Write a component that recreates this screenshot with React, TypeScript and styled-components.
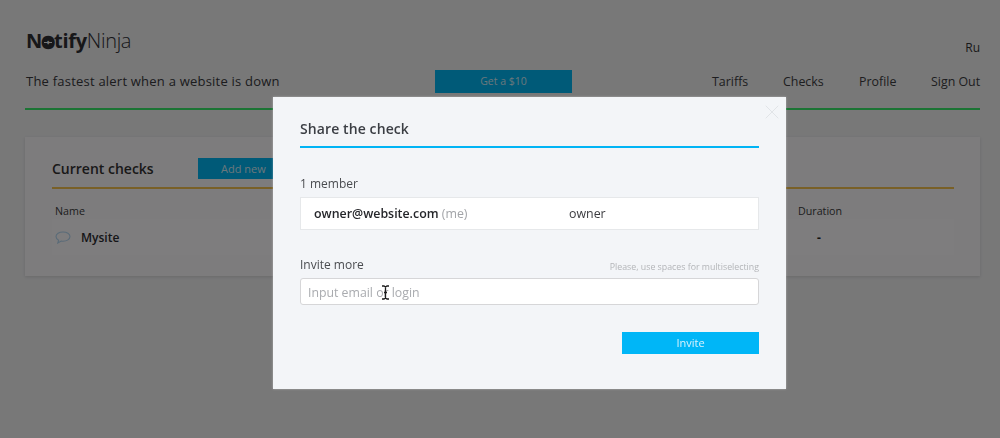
import React from "react";
import styled, { createGlobalStyle } from "styled-components";
import { X } from "lucide-react";

const GlobalStyle = createGlobalStyle`
  html, body {
    margin: 0;
    padding: 0;
    background: #f0f0f1;
    font-family: "Open Sans", "Liberation Sans", sans-serif;
    color: #333;
    overflow: hidden;
  }
  * { box-sizing: border-box; }
`;

const navItems = [
  { label: "Tariffs", width: 71 },
  { label: "Checks", width: 76 },
  { label: "Profile", width: 72 },
  { label: "Sign Out", width: 50 },
];

const App: React.FC = () => {
  return (
    <>
      <GlobalStyle />
      <Page>
        <Header>
          <LogoRow>
            <Logo>
              <b>N<LogoO>o</LogoO>tify</b>Ninja
            </Logo>
            <Lang>Ru</Lang>
          </LogoRow>
          <HeaderRow>
            <Tagline>The fastest alert when a website is down</Tagline>
            <GetButton>Get a $10</GetButton>
            <Nav>
              {navItems.map((item) => (
                <NavItem key={item.label} $width={item.width}>
                  {item.label}
                </NavItem>
              ))}
            </Nav>
          </HeaderRow>
        </Header>
        <Card>
          <CardHead>
            <CardTitle>Current checks</CardTitle>
            <AddButton>Add new</AddButton>
          </CardHead>
          <ColumnRow>
            <span>Name</span>
            <span>Duration</span>
          </ColumnRow>
          <CheckRow>
            <CheckName>
              <svg width="16" height="13" viewBox="0 0 16 13" fill="none">
                <path
                  d="M8 1C4.100 1 1 3 1 5.600c0 1.500 1 2.800 2.600 3.600L2.800 12l3.400-2c.6.1 1.200.2 1.800.2 3.900 0 7-2 7-4.600S11.900 1 8 1z"
                  stroke="#b4d6f0"
                  strokeWidth="1.100"
                />
              </svg>
              Mysite
            </CheckName>
            <Dash>-</Dash>
          </CheckRow>
        </Card>
      </Page>
      <Overlay>
        <Modal>
          <CloseButton>
            <X size={24} strokeWidth={0.9} />
          </CloseButton>
          <ModalTitle>Share the check</ModalTitle>
          <FieldLabel>1 member</FieldLabel>
          <MemberBox>
            <MemberEmail>
              owner@website.com <Me>(me)</Me>
            </MemberEmail>
            <span>owner</span>
          </MemberBox>
          <InviteHead>
            <FieldLabel>Invite more</FieldLabel>
            <Hint>Please, use spaces for multiselecting</Hint>
          </InviteHead>
          <InputWrap>
            <EmailInput placeholder="Input email or login" />
            <TextCursor width="9" height="15" viewBox="0 0 9 15" fill="none">
              <path
                d="M1 1h2l1.500 1L6 1h2M4.500 2v11M1 14h2l1.500-1L6 14h2M3 7.500h3"
                stroke="#1c1c1c"
                strokeWidth="1.300"
              />
            </TextCursor>
          </InputWrap>
          <InviteRow>
            <InviteButton>Invite</InviteButton>
          </InviteRow>
        </Modal>
      </Overlay>
    </>
  );
};

export default App;

const Page = styled.div`
  width: 1000px;
  height: 438px;
  padding: 28px 20px 0 25px;
`;

const Header = styled.header`
  height: 82px;
  border-bottom: 2px solid #36e868;
  padding-left: 1px;
`;

const LogoRow = styled.div`
  display: flex;
  justify-content: space-between;
  height: 32px;
`;

const Logo = styled.div`
  font-size: 20px;
  line-height: 26px;
  letter-spacing: -0.3px;
  font-weight: 300;
  color: #2f2f33;

  b {
    font-weight: 700;
  }
`;

const LogoO = styled.span`
  position: relative;
  display: inline-block;
  -webkit-text-stroke: 2.5px #2f2f33;

  &::after {
    content: "";
    position: absolute;
    left: 2px;
    right: 2px;
    top: 14px;
    height: 1px;
    background: #f0f0f1;
  }
`;

const Lang = styled.span`
  margin-top: 12px;
  font-size: 12px;
  line-height: 16px;
  color: #333;
`;

const HeaderRow = styled.div`
  display: flex;
  align-items: flex-start;
  margin-top: 10px;
`;

const Tagline = styled.div`
  flex: none;
  width: 409px;
  font-size: 13px;
  line-height: 23px;
  letter-spacing: 0.22px;
  color: #38383c;
`;

const GetButton = styled.div`
  flex: none;
  width: 137px;
  height: 23px;
  background: #00b4f0;
  color: #d5eef8;
  font-size: 10.5px;
  line-height: 23px;
  text-align: center;
`;

const Nav = styled.nav`
  flex: none;
  display: flex;
  margin-left: 140px;
`;

const NavItem = styled.span<{ $width: number }>`
  flex: none;
  width: ${(props) => props.$width}px;
  font-size: 12.4px;
  line-height: 23px;
  color: #3c3c40;
  white-space: nowrap;
`;

const Card = styled.section`
  margin-top: 27px;
  width: 955px;
  height: 139px;
  padding: 20px 26px 0 27px;
  background: #fbf8fa;
  box-shadow: 0 1px 3px rgba(0, 0, 0, 0.12);
`;

const CardHead = styled.div`
  display: flex;
  align-items: center;
  height: 32px;
  border-bottom: 2px solid #f2c14e;
  padding-bottom: 8px;
`;

const CardTitle = styled.h2`
  width: 146px;
  margin: 0;
  font-size: 14px;
  font-weight: 600;
  color: #333;
`;

const AddButton = styled.div`
  width: 130px;
  height: 21px;
  background: #00b4f0;
  color: #d5eef8;
  font-size: 11px;
  line-height: 21px;
  padding-left: 23px;
`;

const ColumnRow = styled.div`
  display: grid;
  grid-template-columns: 743px 1fr;
  padding-left: 3px;
  margin-top: 14px;
  font-size: 10.7px;
  line-height: 16px;
  color: #3c3c40;
`;

const CheckRow = styled.div`
  display: grid;
  grid-template-columns: 743px 1fr;
  align-items: center;
  height: 36px;
  padding-left: 3px;
  background: #fcfafc;
`;

const CheckName = styled.div`
  display: flex;
  align-items: center;
  gap: 10px;
  font-size: 12px;
  font-weight: 600;
  color: #2c2c30;
`;

const Dash = styled.div`
  padding-left: 19px;
  font-size: 12px;
  font-weight: 700;
  color: #222;
`;

const Overlay = styled.div`
  position: fixed;
  inset: 0;
  padding: 97px 0 0 273px;
  background: rgba(0, 0, 0, 0.5);
`;

const Modal = styled.div`
  position: relative;
  width: 513px;
  height: 292px;
  padding: 20px 27px 0;
  background: #f3f5f8;
  box-shadow: 0 0 2px rgba(255, 255, 255, 0.4);
`;

const CloseButton = styled.div`
  position: absolute;
  top: 3px;
  right: 2px;
  color: #dfe2e5;
  line-height: 0;
`;

const ModalTitle = styled.h2`
  margin: 0 0 26px;
  height: 31px;
  border-bottom: 2px solid #00b4f5;
  font-size: 14px;
  line-height: 24px;
  font-weight: 600;
  letter-spacing: 0.1px;
  color: #3b3e44;
`;

const FieldLabel = styled.div`
  font-size: 12px;
  line-height: 20px;
  color: #4a4c50;
`;

const MemberBox = styled.div`
  display: flex;
  align-items: center;
  height: 33px;
  margin-top: 3px;
  padding-left: 13px;
  background: #fff;
  border: 1px solid #e6e8ea;
  font-size: 12.4px;
  line-height: 18px;
  color: #3c3c40;
`;

const MemberEmail = styled.span`
  width: 255px;
  font-weight: 600;
  color: #25262a;
`;

const Me = styled.span`
  font-weight: 400;
  color: #a2a4a8;
`;

const InviteHead = styled.div`
  display: flex;
  justify-content: space-between;
  align-items: center;
  margin-top: 25px;
`;

const Hint = styled.span`
  margin-top: 4px;
  font-size: 8.8px;
  color: #b3b5b8;
`;

const InputWrap = styled.div`
  position: relative;
  margin-top: 3px;
`;

const EmailInput = styled.input`
  display: block;
  width: 100%;
  height: 27px;
  padding: 1px 7px 0;
  border: 1px solid #d6d6d8;
  border-radius: 3px;
  background: #fff;
  font-family: inherit;
  font-size: 12.3px;
  outline: none;

  &::placeholder {
    color: #a9abaf;
    opacity: 1;
  }
`;

const TextCursor = styled.svg`
  position: absolute;
  left: 81px;
  top: 7px;
`;

const InviteRow = styled.div`
  display: flex;
  justify-content: flex-end;
  margin-top: 27px;
`;

const InviteButton = styled.div`
  width: 137px;
  height: 22px;
  background: #00b6f7;
  color: #d8f2fd;
  font-size: 11px;
  line-height: 22px;
  text-align: center;
`;
